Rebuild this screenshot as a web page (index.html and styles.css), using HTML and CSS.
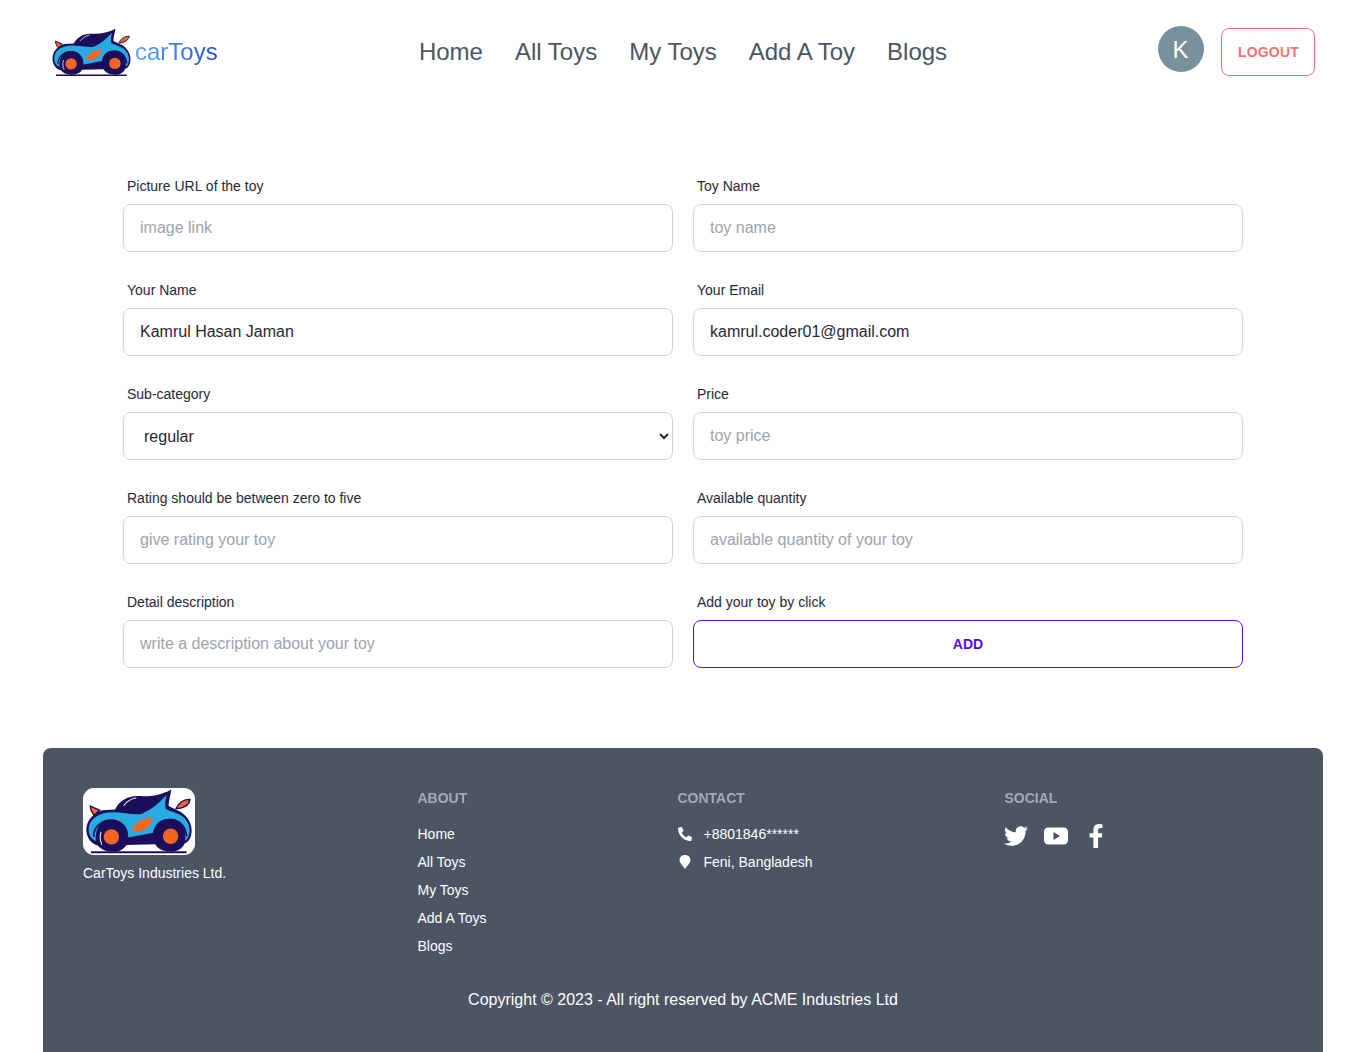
FILE: index.html
```html
<!DOCTYPE html>
<html lang="en">
<head>
<meta charset="utf-8">
<title>carToys</title>
<link rel="stylesheet" href="styles.css">
</head>
<body>
<svg class="defs" width="0" height="0" aria-hidden="true">
  <symbol id="car" viewBox="40 25 335 198">
    <path fill="#1b0f5c" d="M64 213 H350 V219 H64 Z"/>
    <path fill="#f26522" stroke="#1b0f5c" stroke-width="4" d="M318 86 C326 68 342 58 360 58 C358 72 344 84 318 86 Z"/>
    <path fill="#f26522" stroke="#1b0f5c" stroke-width="4" d="M62 78 L90 90 L74 106 C67 98 62 88 62 78 Z"/>
    <path fill="#1b0f5c" d="M136 88 C148 62 176 46 208 48 C242 50 276 44 304 28 C302 46 296 62 296 78 L322 90 C348 100 365 126 365 150 C365 174 354 186 344 190 C336 208 318 216 300 214 C282 214 264 206 256 192 L170 194 C160 210 142 216 124 214 C106 214 92 206 84 196 C62 190 50 170 50 148 C50 120 72 98 98 90 Z"/>
    <path fill="#29abe2" d="M57 148 C57 120 82 101 114 97 C146 93 180 104 212 102 C234 94 262 76 290 44 C286 60 284 74 288 87 L316 98 C342 106 359 126 359 152 C359 164 354 176 346 182 L346 158 C340 128 322 116 300 116 C272 116 254 132 250 158 L176 172 C172 138 150 118 122 118 C96 118 76 138 78 182 C64 176 57 164 57 148 Z"/>
    <path fill="none" stroke="#1b0f5c" stroke-width="5" stroke-linecap="round" d="M72 168 C72 140 96 120 124 120 C148 120 166 134 172 158 M254 152 C260 130 278 118 302 118 C326 118 346 136 350 166"/>
    <path fill="#f26522" d="M186 154 C190 130 214 113 248 112 C246 136 228 156 186 154 Z"/>
    <circle cx="125" cy="170" r="42" fill="#1b0f5c"/>
    <circle cx="302" cy="168" r="42" fill="#1b0f5c"/>
    <circle cx="125" cy="170" r="23" fill="#f26522"/>
    <circle cx="302" cy="168" r="23" fill="#f26522"/>
    <path fill="none" stroke="#fff" stroke-width="3" stroke-linecap="round" d="M162 76 C172 64 186 56 198 54 M94 156 C90 168 91 182 96 192"/>
  </symbol>
</svg>

<div class="page">
  <header class="navbar">
    <a class="brand" href="#">
      <svg class="brand-logo"><use href="#car"/></svg>
      <span class="brand-name">carToys</span>
    </a>
    <nav class="nav-links">
      <a href="#">Home</a>
      <a href="#">All Toys</a>
      <a href="#">My Toys</a>
      <a href="#">Add A Toy</a>
      <a href="#">Blogs</a>
    </nav>
    <div class="nav-end">
      <div class="avatar">K</div>
      <button class="logout" type="button">Logout</button>
    </div>
  </header>

  <main class="form-wrap">
    <form class="toy-form">
      <div class="field">
        <label class="label">Picture URL of the toy</label>
        <input class="control" type="text" placeholder="image link">
      </div>
      <div class="field">
        <label class="label">Toy Name</label>
        <input class="control" type="text" placeholder="toy name">
      </div>
      <div class="field">
        <label class="label">Your Name</label>
        <input class="control" type="text" value="Kamrul Hasan Jaman">
      </div>
      <div class="field">
        <label class="label">Your Email</label>
        <input class="control" type="email" value="kamrul.coder01@gmail.com">
      </div>
      <div class="field">
        <label class="label">Sub-category</label>
        <select class="control select">
          <option>regular</option>
          <option>sports</option>
          <option>truck</option>
        </select>
      </div>
      <div class="field">
        <label class="label">Price</label>
        <input class="control" type="text" placeholder="toy price">
      </div>
      <div class="field">
        <label class="label">Rating should be between zero to five</label>
        <input class="control" type="text" placeholder="give rating your toy">
      </div>
      <div class="field">
        <label class="label">Available quantity</label>
        <input class="control" type="text" placeholder="available quantity of your toy">
      </div>
      <div class="field">
        <label class="label">Detail description</label>
        <input class="control" type="text" placeholder="write a description about your toy">
      </div>
      <div class="field">
        <label class="label">Add your toy by click</label>
        <button class="add" type="button">Add</button>
      </div>
    </form>
  </main>

  <footer class="footer">
    <div class="footer-cols">
      <div class="company">
        <div class="company-logo"><svg class="company-car"><use href="#car"/></svg></div>
        <p class="company-name">CarToys Industries Ltd.</p>
      </div>
      <div class="col">
        <h3 class="col-title">About</h3>
        <a href="#">Home</a>
        <a href="#">All Toys</a>
        <a href="#">My Toys</a>
        <a href="#">Add A Toys</a>
        <a href="#">Blogs</a>
      </div>
      <div class="col">
        <h3 class="col-title">Contact</h3>
        <div class="contact">
          <svg class="contact-icon" viewBox="0 0 512 512"><path transform="matrix(-1 0 0 1 512 0)" d="M493.4 24.6l-104-24c-11.3-2.6-22.9 3.3-27.5 13.9l-48 112c-4.2 9.8-1.4 21.3 6.9 28l60.6 49.6c-36 76.7-98.9 140.5-177.2 177.2l-49.6-60.6c-6.8-8.3-18.2-11.1-28-6.9l-112 48C3.9 366.5-2 378.1.6 389.4l24 104C27.1 504.2 36.7 512 48 512c256.1 0 464-207.5 464-464 0-11.2-7.7-20.9-18.6-23.4z"/></svg>
          <span>+8801846******</span>
        </div>
        <div class="contact">
          <svg class="contact-icon" viewBox="0 0 512 512"><path d="M256 0C136 0 56 84 56 186c0 44 16 78 48 124 38 54 96 116 152 202 56-86 114-148 152-202 32-46 48-80 48-124C456 84 376 0 256 0z"/></svg>
          <span>Feni, Bangladesh</span>
        </div>
      </div>
      <div class="col">
        <h3 class="col-title">Social</h3>
        <div class="socials">
          <svg class="social twitter" viewBox="0 0 512 512"><path d="M459.37 151.716c.325 4.548.325 9.097.325 13.645 0 138.72-105.583 298.558-298.558 298.558-59.452 0-114.68-17.219-161.137-47.106 8.447.974 16.568 1.299 25.34 1.299 49.055 0 94.213-16.568 130.274-44.832-46.132-.975-84.792-31.188-98.112-72.772 6.498.974 12.995 1.624 19.818 1.624 9.421 0 18.843-1.3 27.614-3.573-48.081-9.747-84.143-51.98-84.143-102.985v-1.299c13.969 7.797 30.214 12.67 47.431 13.319-28.264-18.843-46.781-51.005-46.781-87.391 0-19.492 5.197-37.36 14.294-52.954 51.655 63.675 129.3 105.258 216.365 109.807-1.624-7.797-2.599-15.918-2.599-24.04 0-57.828 46.782-104.934 104.934-104.934 30.213 0 57.502 12.67 76.67 33.137 23.715-4.548 46.456-13.32 66.599-25.34-7.798 24.366-24.366 44.833-46.132 57.827 21.117-2.273 41.584-8.122 60.426-16.243-14.292 20.791-32.161 39.308-52.628 54.253z"/></svg>
          <svg class="social youtube" viewBox="0 0 24 24"><path fill-rule="evenodd" d="M4 3.500h16c2.200 0 4 1.800 4 4v9c0 2.200-1.800 4-4 4H4c-2.200 0-4-1.800-4-4v-9c0-2.200 1.800-4 4-4zM9.500 8v8l6.500-4z"/></svg>
          <svg class="social facebook" viewBox="0 0 320 512"><path d="M279.14 288l14.22-92.66h-88.91v-60.13c0-25.35 12.42-50.06 52.24-50.06h40.42V6.26S260.43 0 225.36 0c-73.22 0-121.08 44.38-121.08 124.72v70.62H22.89V288h81.39v224h100.17V288z"/></svg>
        </div>
      </div>
    </div>
    <p class="copyright">Copyright © 2023 - All right reserved by ACME Industries Ltd</p>
  </footer>
</div>
</body>
</html>
```
FILE: styles.css
```css
* { box-sizing: border-box; }
html, body { margin: 0; padding: 0; }
body {
  background: #fff;
  color: #1f2937;
  font-family: "Liberation Sans", Arial, sans-serif;
}
a { color: inherit; text-decoration: none; }
.defs { position: absolute; }
.page { width: 1280px; margin: 0 auto; }

.navbar {
  display: grid;
  grid-template-columns: 1fr auto 1fr;
  align-items: center;
  height: 104px;
  padding: 0 8px;
}
.brand { display: flex; align-items: center; }
.brand-logo { width: 83px; height: 49px; margin-left: -1px; margin-top: 1px; }
.brand-name {
  margin-left: 2px;
  font-size: 24px;
  line-height: 32px;
  background: linear-gradient(to right, #60a5fa, #1d4ed8);
  -webkit-background-clip: text;
  background-clip: text;
  color: transparent;
}
.nav-links {
  display: flex;
  gap: 32px;
  font-size: 24px;
  line-height: 32px;
  color: #4b5563;
}
.nav-end { display: flex; justify-content: flex-end; align-items: center; gap: 17px; }
.avatar {
  width: 46px;
  height: 46px;
  margin-bottom: 6px;
  padding-right: 1px;
  border-radius: 50%;
  background: #78909c;
  color: #fff;
  font-size: 24px;
  line-height: 48px;
  text-align: center;
}
.logout {
  width: 94px;
  height: 48px;
  padding: 0 0 0 1px;
  border: 1px solid #f87272;
  border-radius: 8px;
  background: #fff;
  color: #f87272;
  font: 700 14px/20px "Liberation Sans", Arial, sans-serif;
  letter-spacing: 0.15px;
  text-transform: uppercase;
}

.form-wrap { padding-top: 64px; }
.toy-form {
  display: grid;
  grid-template-columns: 550px 550px;
  gap: 20px;
  width: 1120px;
  margin: 0 auto;
}
.field { display: flex; flex-direction: column; }
.label {
  padding: 8px 4px;
  font-size: 14px;
  line-height: 20px;
  color: #1f2937;
}
.control {
  width: 100%;
  height: 48px;
  padding: 0 16px;
  border: 1px solid #d1d5db;
  border-radius: 8px;
  background: #fff;
  color: #1f2937;
  font: 16px/24px "Liberation Sans", Arial, sans-serif;
  outline: none;
}
.control::placeholder { color: #9ca3af; opacity: 1; }
.add {
  width: 100%;
  height: 48px;
  padding: 0;
  border: 1px solid #570df8;
  border-radius: 8px;
  background: #fff;
  color: #570df8;
  font: 700 14px/20px "Liberation Sans", Arial, sans-serif;
  text-transform: uppercase;
}

.footer {
  margin-top: 80px;
  height: 304px;
  padding: 40px;
  border-radius: 8px 8px 0 0;
  background: #4b5563;
  color: #fff;
  font-size: 14px;
  line-height: 20px;
}
.footer-cols {
  display: grid;
  grid-template-columns: 334.5px 260px 327px 1fr;
}
.company-logo {
  width: 112px;
  height: 67px;
  border-radius: 11px;
  background: #fff;
  overflow: hidden;
}
.company-car { display: block; width: 112px; height: 67px; }
.company-name { margin: 8px 0 0; }
.col { display: flex; flex-direction: column; align-items: flex-start; gap: 8px; }
.col-title {
  margin: 0 0 8px;
  font-size: 14px;
  line-height: 20px;
  font-weight: 700;
  text-transform: uppercase;
  opacity: 0.5;
}
.contact { display: flex; align-items: center; gap: 12px; }
.contact-icon { width: 14px; height: 14px; fill: #fff; }
.socials { display: flex; align-items: center; gap: 16px; margin-left: -1px; }
.social { fill: #fff; display: block; }
.twitter, .youtube, .facebook { width: 24px; height: 24px; }
.copyright {
  margin: 0;
  padding-top: 32px;
  font-size: 16px;
  line-height: 24px;
  width: 1200px;
  text-align: center;
}
```
